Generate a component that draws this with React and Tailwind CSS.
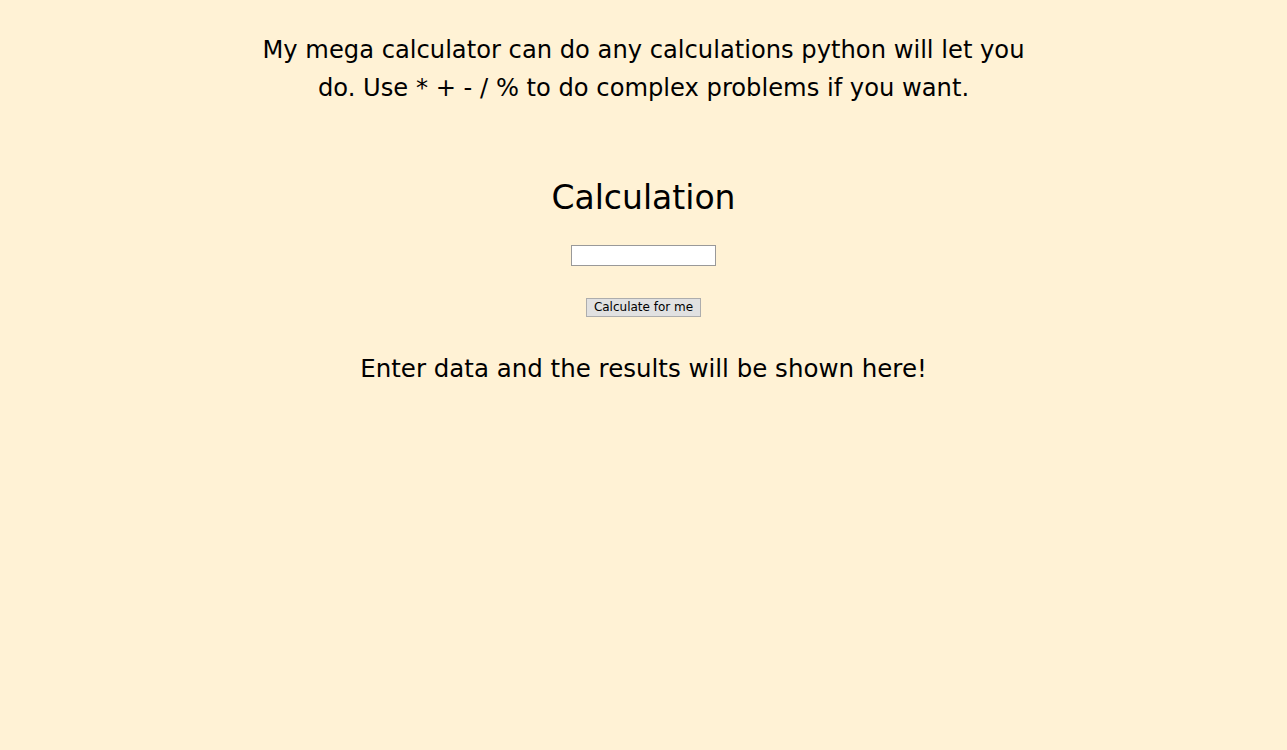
export default function App() {
  return (
    <div className="min-h-screen bg-[#fff2d5] text-black font-['DejaVu_Sans',sans-serif]">
      <div className="flex flex-col items-center text-center">
        {/* Intro */}
        <p className="mt-[31px] w-[790px] text-[24.2px] leading-[38px]">
          My mega calculator can do any calculations python will let you do. Use * + - / % to do complex problems if you want.
        </p>

        {/* Form */}
        <h1 className="mt-[69px] text-[33px] leading-[44px]">Calculation</h1>
        <input
          type="text"
          className="mt-[25px] w-[145px] h-[21px] bg-white border border-[#999999] outline-none px-1 text-[13px]"
        />
        <button className="mt-[32px] w-[115px] h-[19px] bg-[#e1e1e1] border border-[#adadad] text-[12px] leading-[17px]">
          Calculate for me
        </button>

        {/* Result */}
        <p className="mt-[36px] text-[24.5px] leading-[32px]">Enter data and the results will be shown here!</p>
      </div>
    </div>
  )
}
